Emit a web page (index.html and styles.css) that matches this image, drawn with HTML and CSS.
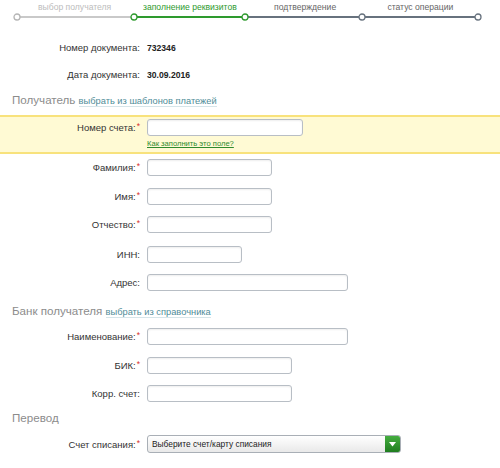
FILE: index.html
```html
<!DOCTYPE html>
<html lang="ru">
<head>
    <meta charset="UTF-8">
    <title>Перевод частному лицу</title>
    <link rel="stylesheet" href="styles.css">
</head>
<body>

<div class="steps">
    <div class="step-labels">
        <span class="step done">выбор получателя</span>
        <span class="step active">заполнение реквизитов</span>
        <span class="step">подтверждение</span>
        <span class="step">статус операции</span>
    </div>
    <svg class="track" width="500" height="9" viewBox="0 0 500 9">
        <line x1="17" y1="4" x2="134" y2="4" stroke="#c9c9c9" stroke-width="2"/>
        <line x1="134" y1="4" x2="245" y2="4" stroke="#2e9a2e" stroke-width="2"/>
        <line x1="245" y1="4" x2="478" y2="4" stroke="#67727e" stroke-width="2"/>
        <circle cx="17" cy="4" r="3" fill="#fff" stroke="#b5b5b5" stroke-width="1.3"/>
        <circle cx="134" cy="4" r="3" fill="#fff" stroke="#2e9a2e" stroke-width="1.3"/>
        <circle cx="245" cy="4" r="3" fill="#fff" stroke="#2e9a2e" stroke-width="1.3"/>
        <circle cx="362" cy="4" r="3" fill="#fff" stroke="#67727e" stroke-width="1.3"/>
        <circle cx="478" cy="4" r="3" fill="#fff" stroke="#67727e" stroke-width="1.3"/>
    </svg>
</div>

<div class="doc">
    <div class="row doc-row">
        <div class="label">Номер документа:</div>
        <div class="value">732346</div>
    </div>
    <div class="row doc-row">
        <div class="label">Дата документа:</div>
        <div class="value">30.09.2016</div>
    </div>
</div>

<div class="heading">Получатель <a href="#" class="heading-link">выбрать из шаблонов платежей</a></div>

<div class="highlight-box">
    <div class="row box-row">
        <div class="label">Номер счета:<span class="req">*</span></div>
        <input type="text" class="input w156">
    </div>
    <a href="#" class="hint">Как заполнить это поле?</a>
</div>

<div class="fields">
    <div class="row field-row first">
        <div class="label">Фамилия:<span class="req">*</span></div>
        <input type="text" class="input w125">
    </div>
    <div class="row field-row">
        <div class="label">Имя:<span class="req">*</span></div>
        <input type="text" class="input w125">
    </div>
    <div class="row field-row">
        <div class="label">Отчество:<span class="req">*</span></div>
        <input type="text" class="input w125">
    </div>
    <div class="row field-row">
        <div class="label">ИНН:</div>
        <input type="text" class="input w95">
    </div>
    <div class="row field-row">
        <div class="label">Адрес:</div>
        <input type="text" class="input w201">
    </div>
</div>

<div class="heading heading-bank">Банк получателя <a href="#" class="heading-link">выбрать из справочника</a></div>

<div class="fields">
    <div class="row field-row first-bank">
        <div class="label">Наименование:<span class="req">*</span></div>
        <input type="text" class="input w201">
    </div>
    <div class="row field-row">
        <div class="label">БИК:<span class="req">*</span></div>
        <input type="text" class="input w145">
    </div>
    <div class="row field-row">
        <div class="label">Корр. счет:</div>
        <input type="text" class="input w145">
    </div>
</div>

<div class="heading heading-transfer">Перевод</div>

<div class="row select-row">
    <div class="label">Счет списания:<span class="req">*</span></div>
    <div class="select">
        <span class="select-text">Выберите счет/карту списания</span>
        <span class="select-btn">
            <svg width="7" height="5" viewBox="0 0 7 5"><path d="M0 0 L7 0 L3.5 4.5 Z" fill="#fff"/></svg>
        </span>
    </div>
</div>

</body>
</html>
```

FILE: styles.css
```css
body {
    margin: 0;
    font-family: "Liberation Sans", Arial, sans-serif;
    font-size: 9.5px;
    color: #333;
    background-color: #fff;
}
.steps {
    height: 22px;
}
.step-labels {
    display: flex;
    padding: 1px 22px 0 17px;
    line-height: 12px;
    font-size: 8.6px;
}
.step {
    flex: 1;
    text-align: center;
    color: #666;
}
.step.done {
    color: #bdbdbd;
}
.step.active {
    color: #2e9a2e;
}
.track {
    display: block;
}
.doc {
    margin-top: 12px;
}
.row {
    display: flex;
    align-items: center;
}
.label {
    width: 140px;
    flex-shrink: 0;
    text-align: right;
    margin-right: 7px;
    white-space: nowrap;
}
.req {
    color: #d9302c;
    font-size: 8.5px;
    vertical-align: top;
    position: relative;
    top: -1px;
    margin-left: 1px;
}
.doc-row {
    height: 27px;
}
.value {
    font-size: 8.6px;
    font-weight: bold;
    color: #222;
}
.heading {
    margin: 3px 0 0 12px;
    font-size: 11.6px;
    line-height: 18px;
    color: #8c8c8c;
}
.heading-link {
    font-size: 9.3px;
    color: #4f8c98;
    text-decoration: none;
    border-bottom: 1px solid #d6e5e9;
}
.highlight-box {
    margin-top: 5px;
    padding: 1px 0 1px;
    background-color: #fffad4;
    border-top: 2px solid #f8e27c;
    border-bottom: 2px solid #f8e27c;
}
.box-row {
    height: 19px;
}
.hint {
    display: block;
    margin-left: 147px;
    font-size: 7.6px;
    line-height: 14px;
    color: #2e8a2e;
}
.input {
    display: block;
    box-sizing: border-box;
    height: 17px;
    margin: 0;
    padding: 0 4px;
    border: 1px solid #b8bec5;
    border-radius: 3px;
    background-color: #fff;
    box-shadow: inset 0 1px 2px rgba(0, 0, 0, 0.07);
}
.w95 { width: 95px; }
.w125 { width: 125px; }
.w145 { width: 145px; }
.w156 { width: 156px; }
.w201 { width: 201px; }
.field-row {
    height: 17px;
    margin-top: 12px;
}
.field-row.first {
    margin-top: 5px;
}
.field-row.first-bank {
    margin-top: 7px;
}
.fields .field-row:nth-child(3) {
    margin-top: 11px;
}
.fields .field-row:nth-child(4) {
    margin-top: 13px;
}
.fields .field-row:nth-child(5) {
    margin-top: 11px;
}
.heading-bank {
    margin-top: 11px;
}
.heading-transfer {
    margin-top: 7px;
}
.select-row {
    margin-top: 8px;
    height: 18px;
}
.select {
    display: flex;
    align-items: center;
    box-sizing: border-box;
    width: 254px;
    height: 18px;
    border: 1px solid #a9afb6;
    border-radius: 3px;
    background: linear-gradient(#ffffff, #e9e9e9);
    overflow: hidden;
}
.select-text {
    flex: 1;
    padding-left: 4px;
    font-size: 8.4px;
    color: #222;
}
.select-btn {
    display: flex;
    align-items: center;
    justify-content: center;
    width: 15px;
    height: 100%;
    background: linear-gradient(#45ad3f, #1f7d1f);
}
```
